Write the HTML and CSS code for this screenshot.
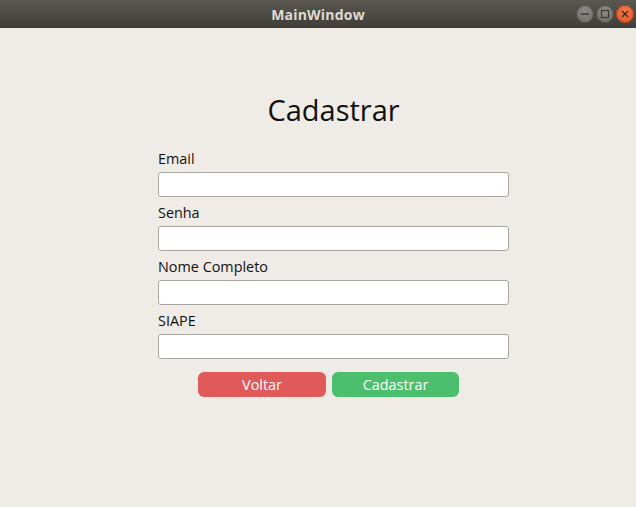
FILE: index.html
```html
<!DOCTYPE html>
<html>
<head>
<meta charset="utf-8">
<link rel="stylesheet" href="styles.css">
</head>
<body>
<div class="window">
  <div class="titlebar">
    <span class="title">MainWindow</span>
    <div class="controls">
      <span class="ctl min"><svg width="18" height="18" viewBox="0 0 18 18"><line x1="5" y1="9" x2="13" y2="9" stroke="#3a3935" stroke-width="1.4"/></svg></span>
      <span class="ctl max"><svg width="18" height="18" viewBox="0 0 18 18"><rect x="5.5" y="5.5" width="7" height="7" fill="none" stroke="#3a3935" stroke-width="1.2"/></svg></span>
      <span class="ctl close"><svg width="18" height="18" viewBox="0 0 18 18"><path d="M6 6 L12 12 M12 6 L6 12" stroke="#3a2a20" stroke-width="1.4"/></svg></span>
    </div>
  </div>
  <div class="content">
    <h1 class="heading">Cadastrar</h1>
    <form class="form">
      <label class="label">Email</label>
      <input class="field" type="text">
      <label class="label">Senha</label>
      <input class="field" type="password">
      <label class="label">Nome Completo</label>
      <input class="field" type="text">
      <label class="label">SIAPE</label>
      <input class="field" type="text">
      <div class="buttons">
        <button type="button" class="btn btn-back">Voltar</button>
        <button type="button" class="btn btn-save">Cadastrar</button>
      </div>
    </form>
  </div>
</div>
</body>
</html>
```
FILE: styles.css
```css
html, body {
  margin: 0;
  padding: 0;
  width: 636px;
  height: 507px;
  overflow: hidden;
  background: #efebe7;
  font-family: "Open Sans", "DejaVu Sans", sans-serif;
}
.window {
  display: flex;
  flex-direction: column;
  height: 507px;
}
.titlebar {
  height: 28px;
  background: linear-gradient(#5a5750, #3f3e39);
  position: relative;
  display: flex;
  align-items: center;
  justify-content: center;
}
.title {
  color: #dfdbd2;
  font-weight: bold;
  font-size: 14px;
  letter-spacing: 0.2px;
}
.controls {
  position: absolute;
  right: 2px;
  top: 5px;
  display: flex;
  gap: 2px;
}
.ctl {
  width: 18px;
  height: 18px;
  border-radius: 50%;
  display: flex;
}
.ctl.min, .ctl.max {
  background: radial-gradient(circle at 50% 35%, #8e8c86, #6a6862);
  box-shadow: inset 0 0 0 1px #4b4a45;
}
.ctl.close {
  background: radial-gradient(circle at 50% 35%, #f27a4e, #e2531f);
  box-shadow: inset 0 0 0 1px #a9431b;
}
.content {
  flex: 1;
  display: flex;
  flex-direction: column;
  padding-left: 158px;
}
.heading {
  width: 351px;
  margin: 64px 0 0 0;
  text-align: center;
  font-weight: normal;
  font-size: 29px;
  line-height: 36px;
  color: #111;
}
.form {
  width: 351px;
  display: flex;
  flex-direction: column;
  margin-top: 19px;
}
.label {
  font-size: 14.4px;
  line-height: 18px;
  height: 18px;
  margin-top: 7px;
  margin-bottom: 4px;
  color: #111;
}
.label:first-child {
  margin-top: 3px;
}
.field {
  box-sizing: border-box;
  width: 351px;
  height: 25px;
  margin: 0;
  border: 1px solid #a9a6a1;
  border-radius: 3px;
  background: #fff;
  outline: none;
}
.buttons {
  display: flex;
  gap: 6px;
  margin-top: 13px;
  padding-left: 40px;
}
.btn {
  width: 128px;
  height: 25px;
  border: none;
  border-radius: 6px;
  color: #fff;
  font-family: inherit;
  font-size: 14.4px;
  padding: 0;
}
.btn-back {
  background: #e05a5a;
}
.btn-save {
  width: 127px;
  background: #4cbf6e;
}
```
